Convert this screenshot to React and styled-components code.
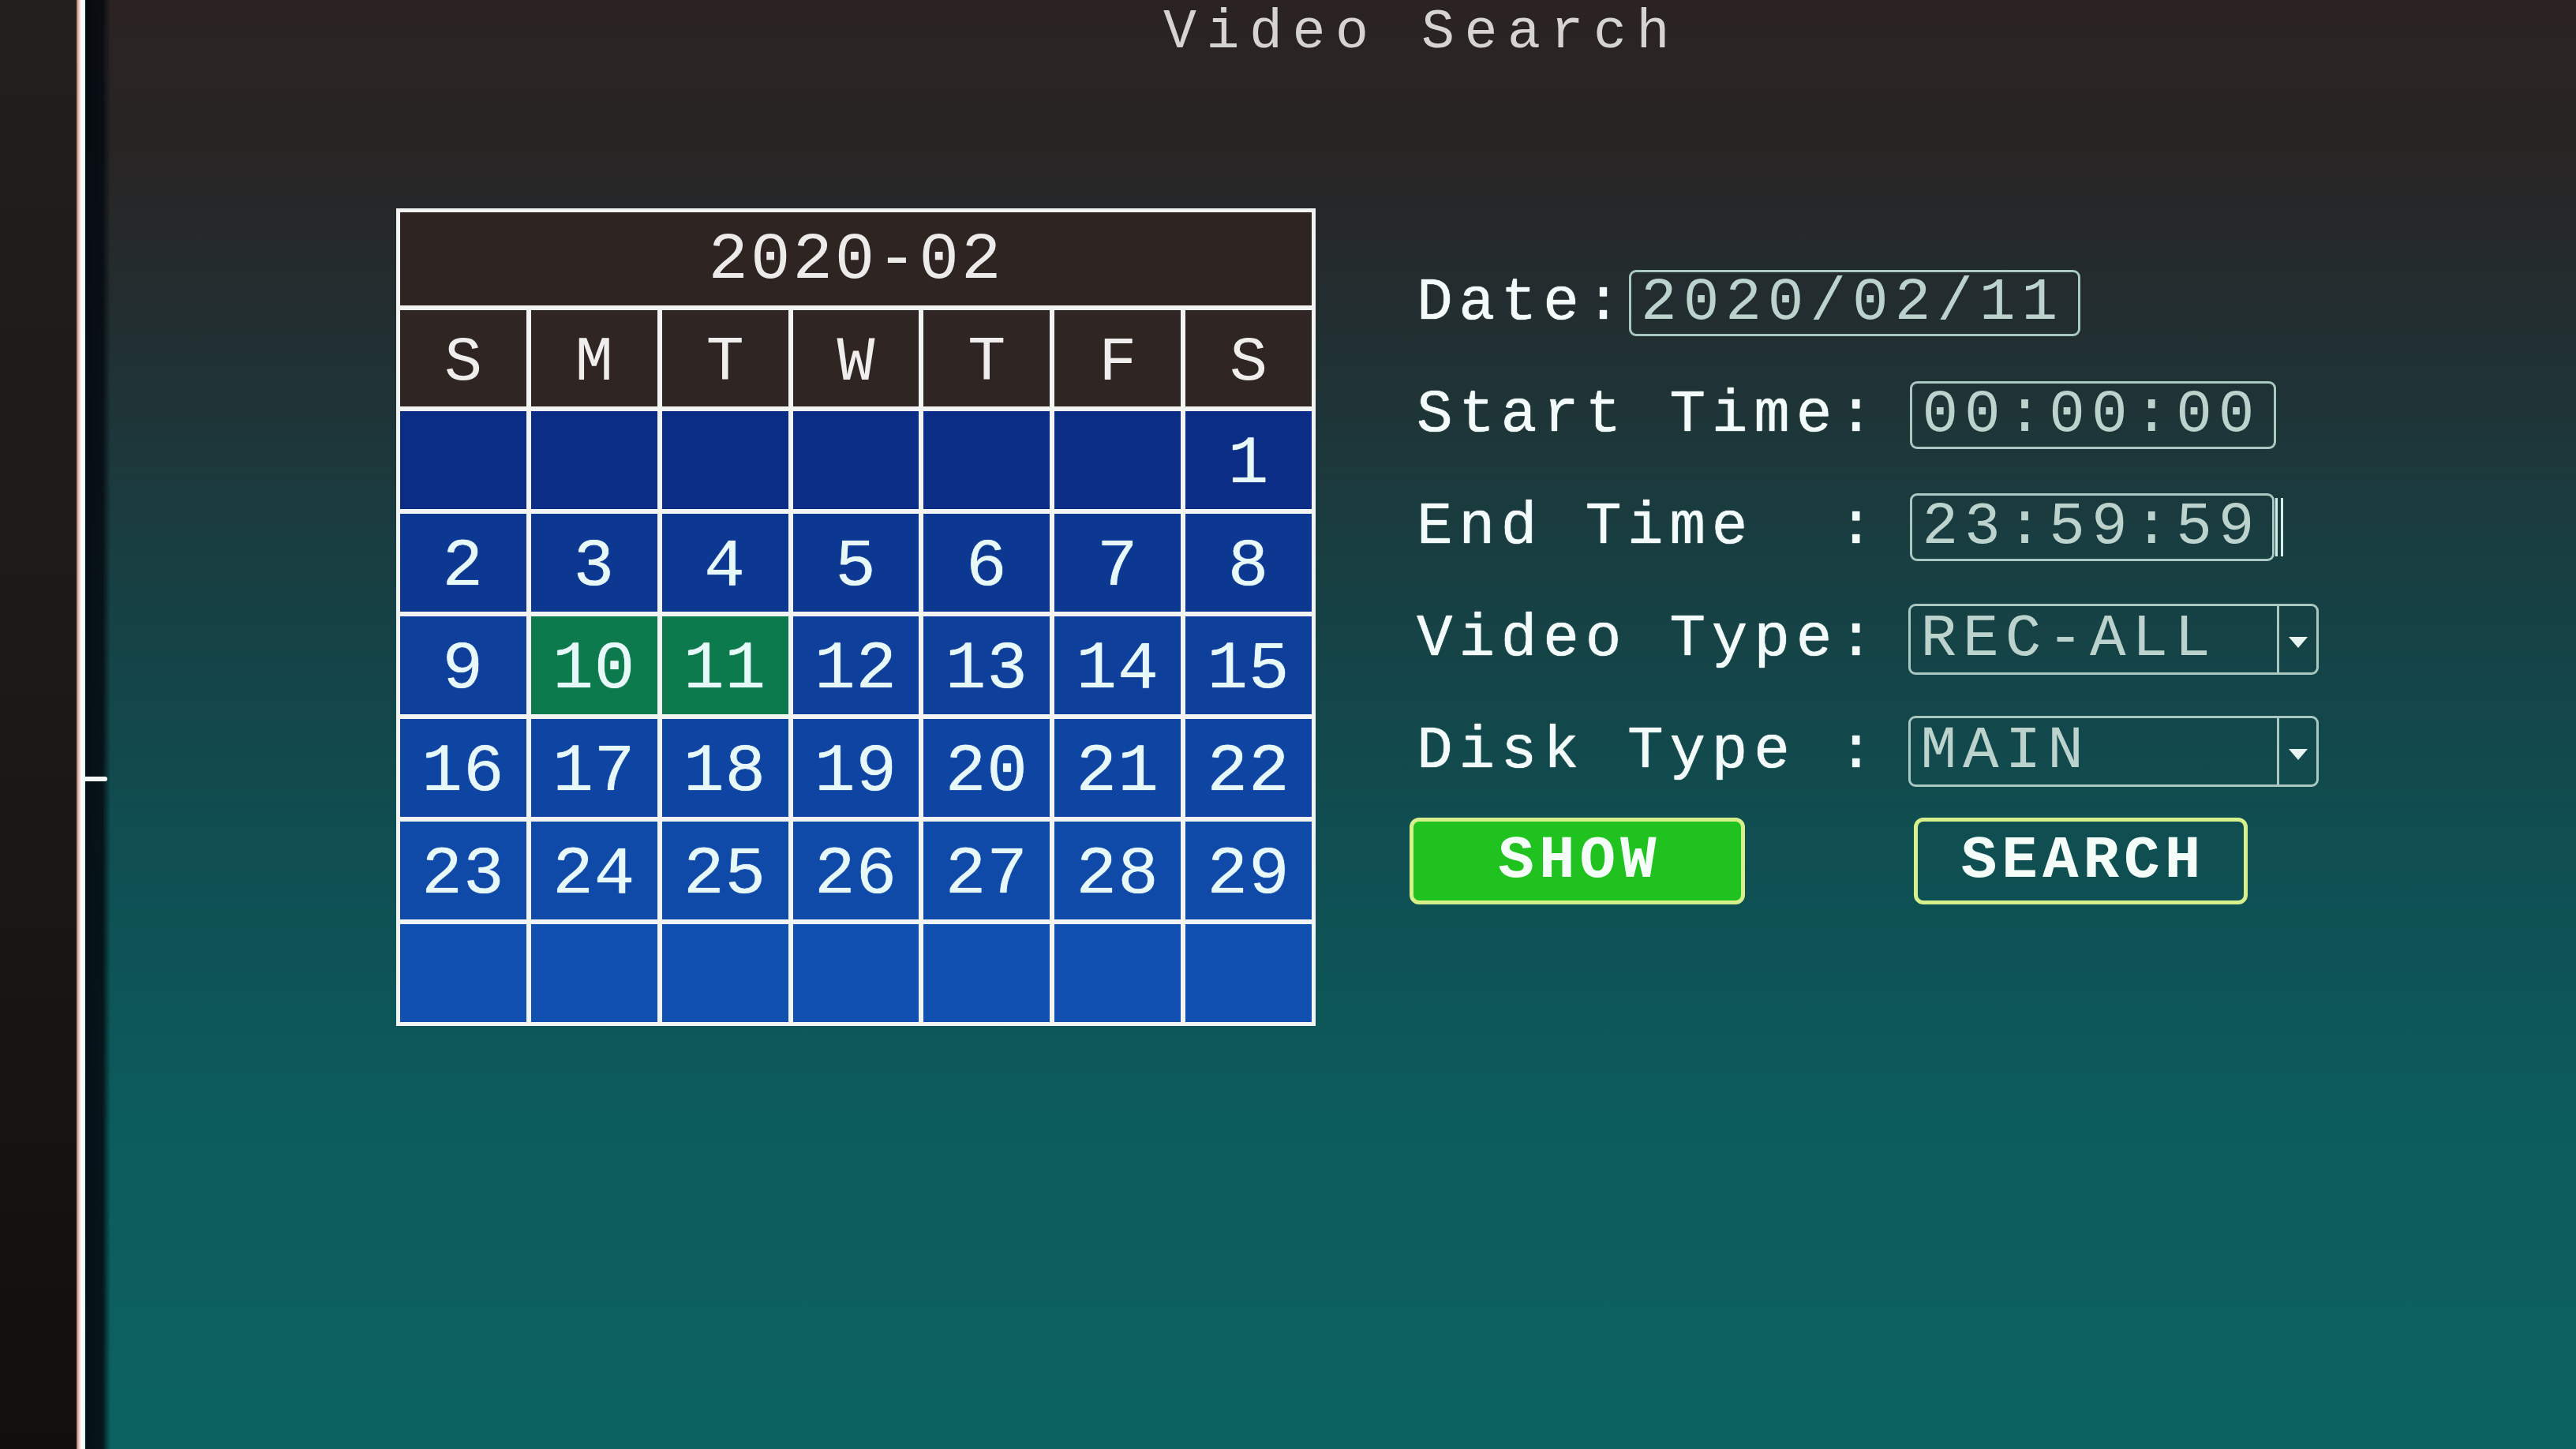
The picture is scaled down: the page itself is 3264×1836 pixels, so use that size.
import React from "react";
import styled, { createGlobalStyle } from "styled-components";

const GlobalStyle = createGlobalStyle`
  html, body { margin: 0; padding: 0; background: #151111; }
  body { font-family: "Liberation Mono", "DejaVu Sans Mono", monospace; }
  * { box-sizing: border-box; }
`;

const Page = styled.div`
  display: flex;
  width: 3264px;
  height: 1836px;
  overflow: hidden;
`;

const Bezel = styled.div`
  width: 97px;
  flex-shrink: 0;
  background: linear-gradient(180deg, #231e1e 0%, #1d1818 50%, #130e0e 100%);
`;

const Edge = styled.div`
  width: 11px;
  flex-shrink: 0;
  background: linear-gradient(90deg, #b07a6a 0%, #f2d8d0 35%, #ffffff 60%, #dff4f6 100%);
`;

const Screen = styled.div`
  position: relative;
  flex: 1;
  display: flex;
  flex-direction: column;
  background:
    linear-gradient(90deg, rgba(4, 10, 16, 0.92) 0px, rgba(4, 10, 16, 0.85) 22px, rgba(4, 10, 16, 0) 32px),
    linear-gradient(180deg, #2b2323 0%, #282424 10%, #222e30 22%, #183e41 38%, #0f4e51 58%, #0c5c5c 78%, #0b6260 100%);
`;

const Tick = styled.div`
  position: absolute;
  left: 0;
  top: 984px;
  width: 28px;
  height: 6px;
  background: #f4f8f8;
  border-radius: 0 3px 3px 0;
`;

const Title = styled.div`
  padding: 0 0 0 1366px;
  font-size: 70px;
  line-height: 84px;
  letter-spacing: 12.5px;
  color: #d6d4d2;
  white-space: pre;
`;

const Body = styled.div`
  display: flex;
  align-items: flex-start;
  margin: 180px 0 0 394px;
`;

const Calendar = styled.div`
  width: 1165px;
  display: grid;
  grid-template-columns: repeat(7, 1fr);
  grid-template-rows: 118px 122px repeat(6, 124px);
  gap: 6px;
  padding: 5px;
  background: #f2f4f4;
`;

const MonthHeader = styled.div`
  grid-column: 1 / -1;
  display: flex;
  align-items: center;
  justify-content: center;
  background: #2e2523;
  color: #ecebea;
  font-size: 84px;
  letter-spacing: 3px;
  padding-top: 2px;
`;

const DayName = styled.div`
  display: flex;
  align-items: center;
  justify-content: center;
  background: #2f2624;
  color: #efeeec;
  font-size: 80px;
  padding-top: 10px;
`;

const DayCell = styled.div`
  display: flex;
  align-items: center;
  justify-content: center;
  background: ${(p) => (p.$selected ? "#0c7a4c" : p.$shade)};
  color: #e6f8f8;
  font-size: 86px;
  letter-spacing: 1px;
  padding-top: 10px;
  text-shadow: 0 0 1px #ffffff;
`;

const Form = styled.div`
  display: flex;
  flex-direction: column;
  margin-left: 119px;
  padding-top: 76px;
`;

const Row = styled.div`
  display: flex;
  align-items: center;
  height: 88px;
  padding-left: 9px;
  margin-bottom: 54px;
`;

const Label = styled.div`
  font-size: 76px;
  line-height: 1;
  letter-spacing: 7.8px;
  color: #f2fbfa;
  white-space: pre;
  text-shadow: 0 0 1px #ffffff, 0 0 1px #ffffff;
`;

const FieldBox = styled.div`
  position: relative;
  display: flex;
  align-items: center;
  width: ${(p) => p.$width}px;
  height: ${(p) => p.$height || 86}px;
  margin-left: ${(p) => p.$gap}px;
  padding-left: 12px;
  border: 3px solid #a9c8c1;
  border-radius: 9px;
  font-size: 76px;
  line-height: 1;
  letter-spacing: 8px;
  color: #bcd2cd;
  white-space: pre;
  overflow: hidden;
`;

const DropPart = styled.div`
  margin-left: auto;
  width: 50px;
  align-self: stretch;
  border-left: 3px solid #a9c8c1;
  display: flex;
  align-items: center;
  justify-content: center;
  padding-top: 8px;
`;

const Cursor = styled.div`
  width: 10px;
  height: 74px;
  margin-left: 1px;
  border-left: 3px solid #d4eeea;
  border-right: 3px solid #d4eeea;
`;

const ButtonRow = styled.div`
  display: flex;
  align-items: center;
  margin-top: -14px;
`;

const Button = styled.div`
  display: flex;
  align-items: center;
  justify-content: center;
  width: ${(p) => p.$width}px;
  height: 110px;
  margin-left: ${(p) => p.$gap || 0}px;
  border: 5px solid #d6f08c;
  border-radius: 12px;
  background: ${(p) => (p.$active ? "#1fc21f" : "transparent")};
  color: #f4fdf8;
  font-size: 76px;
  font-weight: 700;
  letter-spacing: 6px;
  padding-left: 6px;
`;

const Arrow = () => (
  <svg width="26" height="16" viewBox="0 0 26 16">
    <polygon points="1,1 25,1 13,15" fill="#e8f4f2" />
  </svg>
);

const days = ["S", "M", "T", "W", "T", "F", "S"];
const weeks = [
  [null, null, null, null, null, null, 1],
  [2, 3, 4, 5, 6, 7, 8],
  [9, 10, 11, 12, 13, 14, 15],
  [16, 17, 18, 19, 20, 21, 22],
  [23, 24, 25, 26, 27, 28, 29],
  [null, null, null, null, null, null, null],
];
const shades = ["#0b2d86", "#0c3892", "#0d3f9b", "#0e45a3", "#0f4aa9", "#1150b0"];
const selected = [10, 11];

export default function App() {
  return (
    <>
      <GlobalStyle />
      <Page>
        <Bezel />
        <Edge />
        <Screen>
          <Tick />
          <Title>Video Search</Title>
          <Body>
            <Calendar>
              <MonthHeader>2020-02</MonthHeader>
              {days.map((d, i) => (
                <DayName key={"d" + i}>{d}</DayName>
              ))}
              {weeks.map((w, wi) =>
                w.map((n, di) => (
                  <DayCell
                    key={wi + "-" + di}
                    $shade={shades[wi]}
                    $selected={n !== null && selected.includes(n)}
                  >
                    {n}
                  </DayCell>
                ))
              )}
            </Calendar>
            <Form>
              <Row>
                <Label>Date:</Label>
                <FieldBox $width={572} $height={84} $gap={2}>2020/02/11</FieldBox>
              </Row>
              <Row>
                <Label>Start Time:</Label>
                <FieldBox $width={464} $gap={38}>00:00:00</FieldBox>
              </Row>
              <Row>
                <Label>{"End Time  :"}</Label>
                <FieldBox $width={462} $gap={38}>23:59:59</FieldBox>
                <Cursor />
              </Row>
              <Row>
                <Label>Video Type:</Label>
                <FieldBox $width={520} $height={90} $gap={36}>
                  REC-ALL
                  <DropPart>
                    <Arrow />
                  </DropPart>
                </FieldBox>
              </Row>
              <Row>
                <Label>Disk Type :</Label>
                <FieldBox $width={520} $height={90} $gap={36}>
                  MAIN
                  <DropPart>
                    <Arrow />
                  </DropPart>
                </FieldBox>
              </Row>
              <ButtonRow>
                <Button $width={425} $active>SHOW</Button>
                <Button $width={423} $gap={214}>SEARCH</Button>
              </ButtonRow>
            </Form>
          </Body>
        </Screen>
      </Page>
    </>
  );
}
